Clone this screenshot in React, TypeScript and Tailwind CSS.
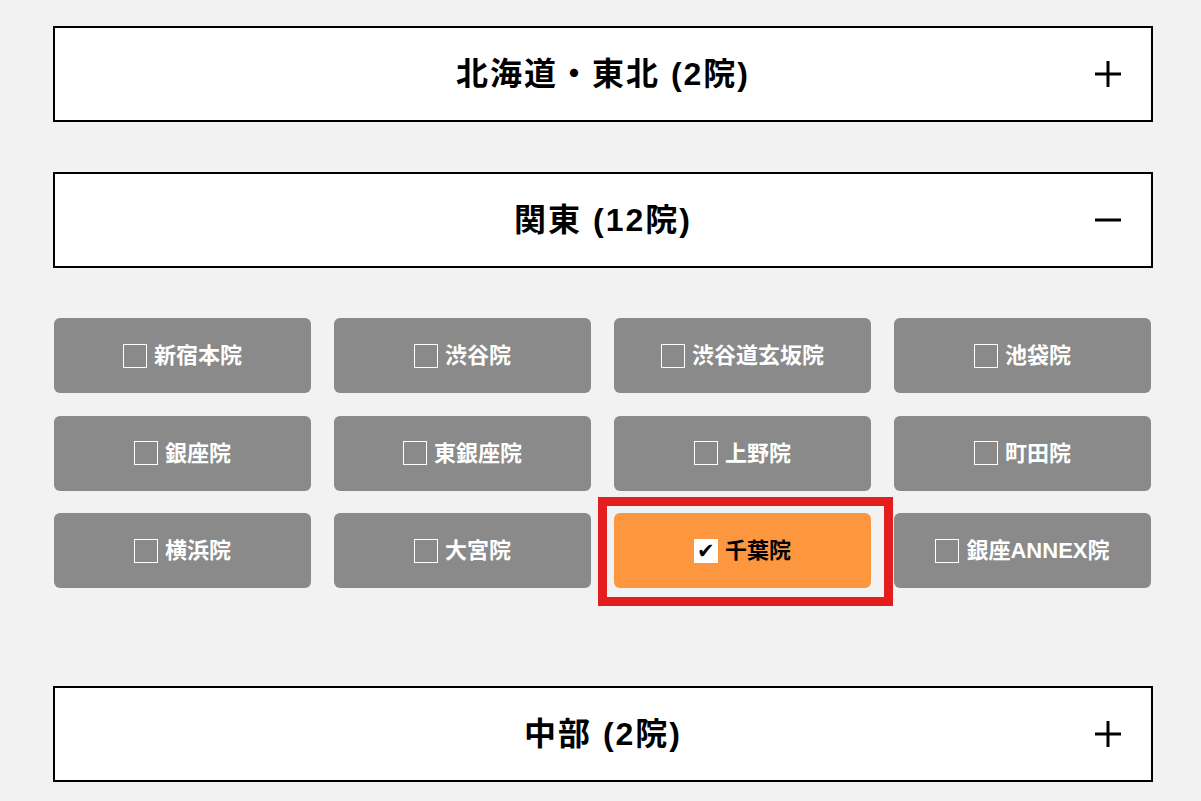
import { FC } from "react";

const FONT = "font-['Liberation_Sans','Noto_Sans_CJK_JP',sans-serif]";

const kanto = [
  "新宿本院",
  "渋谷院",
  "渋谷道玄坂院",
  "池袋院",
  "銀座院",
  "東銀座院",
  "上野院",
  "町田院",
  "横浜院",
  "大宮院",
  "千葉院",
  "銀座ANNEX院",
];

interface IHeaderProps {
  title: string;
  open?: boolean;
}

const RegionHeader: FC<IHeaderProps> = ({ title, open }) => (
  <div className="relative flex h-[96px] items-center justify-center border-2 border-black bg-white">
    <span className="text-[32px] font-bold tracking-[2px] text-black">{title}</span>
    <svg className="absolute right-[30px] top-1/2 h-[26px] w-[26px] -translate-y-1/2" viewBox="0 0 26 26">
      <rect x="0" y="11.5" width="26" height="3" fill="#000" />
      {!open && <rect x="11.5" y="0" width="3" height="26" fill="#000" />}
    </svg>
  </div>
);

interface IClinicProps {
  name: string;
  checked?: boolean;
}

const ClinicButton: FC<IClinicProps> = ({ name, checked }) => (
  <div className="relative">
    <button
      className={`flex h-[75px] w-full items-center justify-center gap-[7px] rounded-md ${
        checked ? "bg-[#fd973f] text-black" : "bg-[#8a8a8a] text-white"
      }`}
    >
      {checked ? (
        <span className="flex h-[24px] w-[24px] items-center justify-center bg-white text-[21px] leading-none text-black">
          ✔
        </span>
      ) : (
        <span className="h-[24px] w-[24px] border border-white" />
      )}
      <span className="text-[22px] font-bold">{name}</span>
    </button>
    {checked && (
      <div className="pointer-events-none absolute left-[-16px] top-[-16px] h-[109px] w-[295px] border-[9px] border-[#e41d1f]" />
    )}
  </div>
);

export default function App() {
  return (
    <div className={`min-h-[801px] w-full bg-[#f2f2f2] ${FONT}`}>
      <div className="ml-[53px] w-[1100px] pt-[26px]">
        <RegionHeader title="北海道・東北 (2院)" />
        <div className="mt-[50px]">
          <RegionHeader title="関東 (12院)" open />
        </div>
        <div className="ml-px mt-[50px] grid grid-cols-[repeat(4,257px)] gap-x-[23px] gap-y-[22.5px]">
          {kanto.map((name) => (
            <ClinicButton key={name} name={name} checked={name === "千葉院"} />
          ))}
        </div>
        <div className="mt-[98px]">
          <RegionHeader title="中部 (2院)" />
        </div>
      </div>
    </div>
  );
}
